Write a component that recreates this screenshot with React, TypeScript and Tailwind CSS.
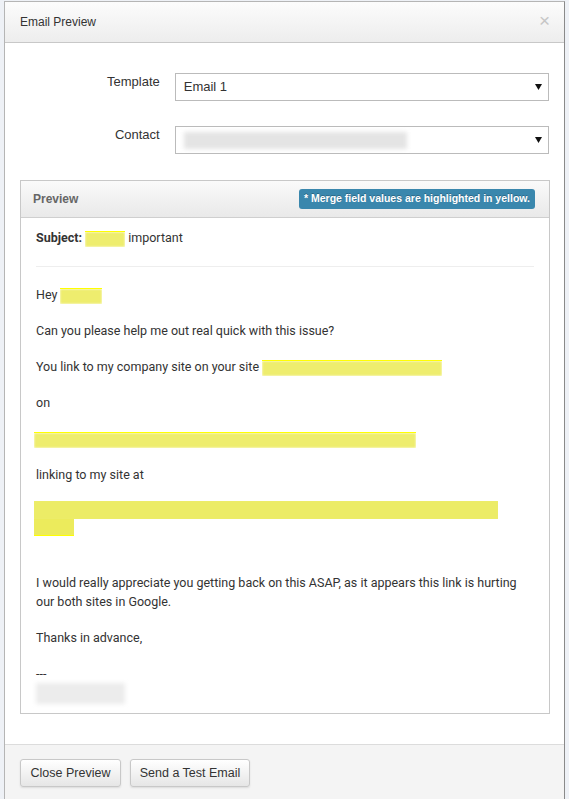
import React from "react";

const body = { fontFamily: "Roboto, 'Liberation Sans', sans-serif" };
const ui = { fontFamily: "'Liberation Sans', Arial, sans-serif" };

function Arrow() {
  return (
    <svg width="7" height="6" viewBox="0 0 7 6" className="shrink-0">
      <path d="M0 0 L7 0 L3.5 6 Z" fill="#111" />
    </svg>
  );
}

function Mark({ w, h = 16, className = "" }: { w: number; h?: number; className?: string }) {
  return (
    <span
      className={"inline-block align-middle overflow-hidden border-t border-[#ffff00] " + className}
      style={{ width: w, height: h }}
    >
      <span className="block h-full w-full bg-[#eeed6e] blur-[1px]" />
    </span>
  );
}

function SelectBox({ children }: { children: React.ReactNode }) {
  return (
    <div className="flex h-[28px] w-[375px] items-center justify-between border border-[#bbb] bg-white pl-[8px] pr-[6px]">
      {children}
      <Arrow />
    </div>
  );
}

export default function App() {
  return (
    <div className="h-[799px] w-[569px] overflow-hidden bg-[#eef1f6] pt-[1px] pl-[4px]">
      <div className="flex h-[820px] w-[561px] flex-col border border-[#b5b5b5] border-r-[#8a8a8a] bg-white">
        {/* header */}
        <div
          className="flex h-[41px] items-center justify-between border-b border-[#c8c8c8] bg-gradient-to-b from-[#fcfcfc] to-[#ededed] pl-[15px] pr-[14px]"
          style={ui}
        >
          <span className="text-[12px] text-[#333]">Email Preview</span>
          <span className="-mt-[3px] text-[19px] leading-none text-[#c6c6c6]">×</span>
        </div>

        {/* body */}
        <div className="px-[15px] pt-[30px] pb-[30px]" style={ui}>
          <div className="flex items-start">
            <div className="w-[155px] pt-[1px] pr-[15px] text-right text-[13px] leading-[16px] text-[#333]">Template</div>
            <SelectBox>
              <span className="text-[13px] text-[#333]">Email 1</span>
            </SelectBox>
          </div>
          <div className="mt-[25px] flex items-start">
            <div className="w-[155px] pt-[1px] pr-[15px] text-right text-[13px] leading-[16px] text-[#333]">Contact</div>
            <SelectBox>
              <span className="block h-[17px] w-[223px] bg-[#e4e4e4] blur-[2px]" />
            </SelectBox>
          </div>

          {/* preview panel */}
          <div className="mt-[26px] w-[530px] border border-[#c8c8c8]">
            <div className="flex h-[37px] items-center justify-between border-b border-[#cfcfcf] bg-gradient-to-b from-[#fafafa] to-[#e9e9e9] pl-[12px] pr-[14px]">
              <span className="text-[12px] font-bold text-[#666]">Preview</span>
              <span className="flex h-[20px] items-center rounded-[3px] bg-[#3a87ad] px-[5px] text-[10.5px] font-bold text-white [text-shadow:0_-1px_0_rgba(0,0,0,0.25)]">
                * Merge field values are highlighted in yellow.
              </span>
            </div>
            <div className="px-[15px] pt-[10px] pb-[9px] text-[12.5px] leading-[19px] text-[#333]" style={body}>
              <div>
                <b>Subject:</b> <Mark w={40} /> important
              </div>
              <div className="mt-[19px] mb-[18px] h-px bg-[#eee]" />
              <p>
                Hey <Mark w={42} />
              </p>
              <p className="mt-[17px]">Can you please help me out real quick with this issue?</p>
              <p className="mt-[17px]">
                You link to my company site on your site <Mark w={180} />
              </p>
              <p className="mt-[17px]">on</p>
              <p className="mt-[17px] -ml-[2px]">
                <Mark w={382} />
              </p>
              <p className="mt-[17px]">linking to my site at</p>
              <div className="mt-[17px] -ml-[2px] flex flex-col">
                <span className="block h-[18px] w-[464px] overflow-hidden bg-[#eeed6e]">
                  <span className="block h-full w-full bg-[#ecec66] blur-[1px]" />
                </span>
                <span className="block h-[17px] w-[40px] overflow-hidden border-b border-[#ffff00] bg-[#eceb5c]" />
              </div>
              <p className="mt-[37px]">
                I would really appreciate you getting back on this ASAP, as it appears this link is hurting our both
                sites in Google.
              </p>
              <p className="mt-[17px]">Thanks in advance,</p>
              <p className="mt-[17px]">---</p>
              <div className="h-[21px] w-[89px] bg-[#ececec] blur-[2px]" />
            </div>
          </div>
        </div>

        {/* footer */}
        <div className="flex flex-1 gap-[9px] border-t border-[#dcdcdc] bg-[#f4f4f4] px-[15px] pt-[14px]" style={ui}>
          <button className="h-[28px] w-[101px] rounded-[3px] border border-[#c8c8c8] bg-gradient-to-b from-white to-[#e6e6e6] text-[12.5px] text-[#333] shadow-[0_1px_2px_rgba(0,0,0,0.1)]">
            Close Preview
          </button>
          <button className="h-[28px] w-[120px] rounded-[3px] border border-[#c8c8c8] bg-gradient-to-b from-white to-[#e6e6e6] text-[12.5px] text-[#333] shadow-[0_1px_2px_rgba(0,0,0,0.1)]">
            Send a Test Email
          </button>
        </div>
      </div>
    </div>
  );
}
